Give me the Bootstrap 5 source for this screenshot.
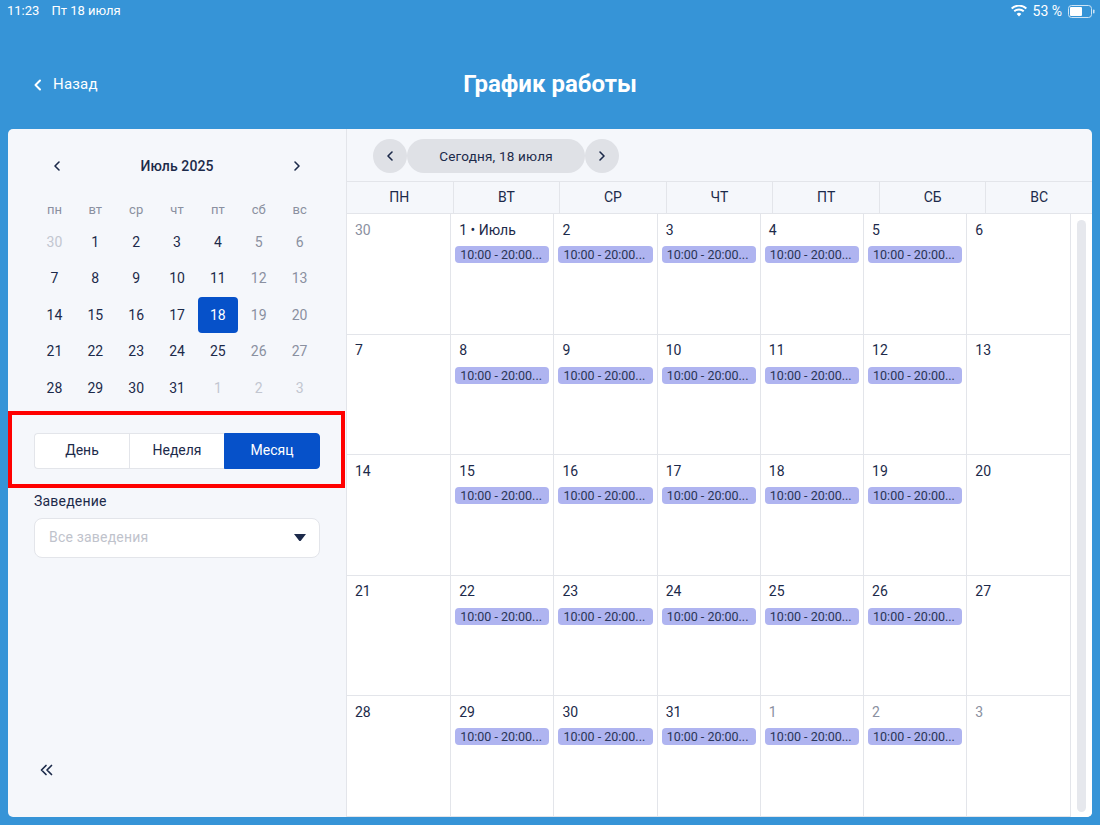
<!DOCTYPE html>
<html lang="ru">
<head>
<meta charset="utf-8">
<title>График работы</title>
<link href="https://cdn.jsdelivr.net/npm/bootstrap@5.3.0/dist/css/bootstrap.min.css" rel="stylesheet">
<style>
html,body{height:825px;overflow:hidden}
body{background:#3694d7;font-family:Roboto,"Liberation Sans",sans-serif;color:#1c2a4a;font-size:14px}
.status-row{height:22px;padding:0 5px 0 7px;color:#fff;font-size:13px;line-height:22px}
.status-left{gap:12px}
.status-right{font-size:14px;gap:6px}
.top-row{height:107px;color:#fff;position:relative;padding-top:18px}
.back-link{color:#fff;font-size:15px;text-decoration:none;padding:0 0 0 31px;letter-spacing:.2px}
.page-title{font-size:24px;font-weight:700;margin:0 0 2px;line-height:28px}
.shell{height:688px;margin:0 8px;background:#f5f7fb;border-radius:5px;overflow:hidden}
.side{width:338px;flex:none;padding-top:21px;position:relative}
.month-head{height:32px;padding:0 43px 0 43px;font-weight:500;font-size:14px;letter-spacing:.1px}
.mini-grid{display:grid;grid-template-columns:repeat(7,40.86px);grid-template-rows:28px repeat(5,36.4px);margin:14px 0 0 26px;text-align:center;align-items:center;justify-items:center;font-size:14px}
.mini-grid>span{width:41px;line-height:36.4px}
.mini-grid>.wd{color:#8a90a0;font-size:13px;line-height:28px}
.mini-grid>.dim{color:#8a90a0}
.mini-grid>.faint{color:#c2c6d0}
.mini-grid>.sel{background:#0651c9;color:#fff;border-radius:4px;width:40px}
.red-box{height:77px;margin-top:5px;border:4px solid #f00;margin-right:1px;padding:18px 22px 0 22px}
.seg{height:36px;width:286px;display:flex}
.seg .btn{flex:1 1 0;background:#fff;border:1px solid #e3e5ea;color:#1c2a4a;font-size:14px;padding:0;border-radius:0;line-height:33px}
.seg .btn:first-child{border-radius:4px 0 0 4px;border-right:0}
.seg .btn:nth-child(2){border-right:0}
.seg .btn.on{background:#0651c9;border-color:#0651c9;color:#fff;border-radius:0 4px 4px 0}
.venue{margin:3px 26px 0 26px}
.venue-label{font-size:14px;line-height:20px;margin-bottom:7px;letter-spacing:.2px}
.venue-box{height:40px;background:#fff;border:1px solid #e3e5ea;border-radius:8px;padding:0 13px 0 14px;color:#bfc3cc;font-size:14px;letter-spacing:.2px}
.collapse-btn{position:absolute;left:32px;bottom:41px;line-height:0}
.main-pane{flex:1;min-width:0;border-left:1px solid #e3e5ea;display:flex;flex-direction:column}
.tool-row{height:52px;padding:10px 0 0 26px;flex:none}
.pill{height:34px;background:#dfe1e6;display:flex;align-items:center;justify-content:center;font-size:13.5px;letter-spacing:.2px}
.pill-round{width:34px;border-radius:50%}
.pill-wide{width:178px;border-radius:17px}
.head-row{display:grid;grid-template-columns:repeat(7,1fr);height:33px;margin-left:-1px;border-top:1px solid #e3e5ea;border-bottom:1px solid #e3e5ea;flex:none}
.head-row>div{text-align:center;line-height:30px;font-size:14px;border-left:1px solid #e3e5ea}
.head-row>div:first-child{border-left:0}
.scroll-zone{flex:1;display:flex;background:#fff;min-height:0}
.month-grid{width:722.5px;flex:none;display:grid;grid-template-columns:repeat(7,1fr);grid-template-rows:repeat(5,1fr)}
.day{border-left:1px solid #e3e5ea;border-bottom:1px solid #e3e5ea;padding:7.5px 4px 0 4px;min-width:0;overflow:hidden}
.day:nth-child(7n+1){border-left:0}
.day-num{padding-left:4px;font-size:14px;line-height:17px;height:24.5px}
.day.out .day-num{color:#8a90a0}
.shift{display:block;height:17px;line-height:17px;background:#afb4f0;border-radius:4px;font-size:12.5px;padding:0 5px;white-space:nowrap;overflow:hidden;color:#2a3557}
.rail{flex:1;border-left:1px solid #e3e5ea;padding:6px 6px 5px 6px}
.rail-thumb{width:9px;height:100%;background:#e6e8ed;border-radius:5px}
</style>
</head>
<body>
<div class="status-row d-flex justify-content-between">
  <div class="status-left d-flex"><span>11:23</span><span>Пт 18 июля</span></div>
  <div class="status-right d-flex align-items-center">
    <svg width="16" height="12" viewBox="0 0 16 12"><path d="M8 11.5 5.7 8.9a3.4 3.4 0 0 1 4.6 0ZM3.9 7 2.6 5.6a8 8 0 0 1 10.8 0L12.1 7a6 6 0 0 0-8.200 0ZM1.300 4.200 0 2.800a11.800 11.800 0 0 1 16 0l-1.300 1.400a10 10 0 0 0-13.400 0Z" fill="#fff"/></svg>
    <span>53 %</span>
    <svg width="27" height="13" viewBox="0 0 27 13"><rect x=".5" y=".5" width="23" height="12" rx="3" fill="none" stroke="#cfe4f5"/><rect x="2" y="2" width="12" height="9" rx="1" fill="#fff"/><rect x="25" y="4.500" width="1.500" height="4" rx=".7" fill="#cfe4f5"/></svg>
  </div>
</div>
<div class="top-row d-flex align-items-center justify-content-center">
  <a class="back-link position-absolute start-0 d-flex align-items-center gap-2" href="#">
    <svg width="14" height="14" viewBox="0 0 14 14" fill="none" stroke="#fff" stroke-width="2" stroke-linecap="round" stroke-linejoin="round"><path d="M9 2.500 4.500 7 9 11.500"/></svg>
    <span>Назад</span>
  </a>
  <h1 class="page-title">График работы</h1>
</div>
<div class="shell d-flex">
  <aside class="side">
    <div class="month-head d-flex align-items-center justify-content-between">
      <svg width="12" height="12" viewBox="0 0 12 12" fill="none" stroke="#1c2a4a" stroke-width="1.600" stroke-linecap="round" stroke-linejoin="round"><path d="M8 2 4 6l4 4"/></svg>
      <span>Июль 2025</span>
      <svg width="12" height="12" viewBox="0 0 12 12" fill="none" stroke="#1c2a4a" stroke-width="1.600" stroke-linecap="round" stroke-linejoin="round"><path d="m4 2 4 4-4 4"/></svg>
    </div>
    <div class="mini-grid">
      <span class="wd">пн</span><span class="wd">вт</span><span class="wd">ср</span><span class="wd">чт</span><span class="wd">пт</span><span class="wd">сб</span><span class="wd">вс</span>
      <span class="faint">30</span><span>1</span><span>2</span><span>3</span><span>4</span><span class="dim">5</span><span class="dim">6</span>
      <span>7</span><span>8</span><span>9</span><span>10</span><span>11</span><span class="dim">12</span><span class="dim">13</span>
      <span>14</span><span>15</span><span>16</span><span>17</span><span class="sel">18</span><span class="dim">19</span><span class="dim">20</span>
      <span>21</span><span>22</span><span>23</span><span>24</span><span>25</span><span class="dim">26</span><span class="dim">27</span>
      <span>28</span><span>29</span><span>30</span><span>31</span><span class="faint">1</span><span class="faint">2</span><span class="faint">3</span>
    </div>
    <div class="red-box">
      <div class="seg" role="group">
        <button type="button" class="btn">День</button>
        <button type="button" class="btn">Неделя</button>
        <button type="button" class="btn on">Месяц</button>
      </div>
    </div>
    <div class="venue">
      <div class="venue-label">Заведение</div>
      <div class="venue-box d-flex align-items-center justify-content-between">
        <span>Все заведения</span>
        <svg width="12" height="7" viewBox="0 0 12 7"><path d="M0 0h12L7 6.500a1.200 1.200 0 0 1-2 0Z" fill="#1c2a4a"/></svg>
      </div>
    </div>
    <div class="collapse-btn">
      <svg width="13" height="12" viewBox="0 0 13 12" fill="none" stroke="#1c2a4a" stroke-width="1.700" stroke-linecap="round" stroke-linejoin="round"><path d="M6 1.500 1.500 6 6 10.500M11.500 1.500 7 6l4.500 4.500"/></svg>
    </div>
  </aside>
  <section class="main-pane">
    <div class="tool-row d-flex">
      <div class="pill pill-round"><svg width="12" height="12" viewBox="0 0 12 12" fill="none" stroke="#1c2a4a" stroke-width="1.600" stroke-linecap="round" stroke-linejoin="round"><path d="M8 2 4 6l4 4"/></svg></div>
      <div class="pill pill-wide">Сегодня, 18 июля</div>
      <div class="pill pill-round"><svg width="12" height="12" viewBox="0 0 12 12" fill="none" stroke="#1c2a4a" stroke-width="1.600" stroke-linecap="round" stroke-linejoin="round"><path d="m4 2 4 4-4 4"/></svg></div>
    </div>
    <div class="head-row"><div>ПН</div><div>ВТ</div><div>СР</div><div>ЧТ</div><div>ПТ</div><div>СБ</div><div>ВС</div></div>
    <div class="scroll-zone">
      <div class="month-grid">
        <div class="day out"><div class="day-num">30</div></div>
        <div class="day"><div class="day-num">1 • Июль</div><span class="shift">10:00 - 20:00...</span></div>
        <div class="day"><div class="day-num">2</div><span class="shift">10:00 - 20:00...</span></div>
        <div class="day"><div class="day-num">3</div><span class="shift">10:00 - 20:00...</span></div>
        <div class="day"><div class="day-num">4</div><span class="shift">10:00 - 20:00...</span></div>
        <div class="day"><div class="day-num">5</div><span class="shift">10:00 - 20:00...</span></div>
        <div class="day"><div class="day-num">6</div></div>
        <div class="day"><div class="day-num">7</div></div>
        <div class="day"><div class="day-num">8</div><span class="shift">10:00 - 20:00...</span></div>
        <div class="day"><div class="day-num">9</div><span class="shift">10:00 - 20:00...</span></div>
        <div class="day"><div class="day-num">10</div><span class="shift">10:00 - 20:00...</span></div>
        <div class="day"><div class="day-num">11</div><span class="shift">10:00 - 20:00...</span></div>
        <div class="day"><div class="day-num">12</div><span class="shift">10:00 - 20:00...</span></div>
        <div class="day"><div class="day-num">13</div></div>
        <div class="day"><div class="day-num">14</div></div>
        <div class="day"><div class="day-num">15</div><span class="shift">10:00 - 20:00...</span></div>
        <div class="day"><div class="day-num">16</div><span class="shift">10:00 - 20:00...</span></div>
        <div class="day"><div class="day-num">17</div><span class="shift">10:00 - 20:00...</span></div>
        <div class="day"><div class="day-num">18</div><span class="shift">10:00 - 20:00...</span></div>
        <div class="day"><div class="day-num">19</div><span class="shift">10:00 - 20:00...</span></div>
        <div class="day"><div class="day-num">20</div></div>
        <div class="day"><div class="day-num">21</div></div>
        <div class="day"><div class="day-num">22</div><span class="shift">10:00 - 20:00...</span></div>
        <div class="day"><div class="day-num">23</div><span class="shift">10:00 - 20:00...</span></div>
        <div class="day"><div class="day-num">24</div><span class="shift">10:00 - 20:00...</span></div>
        <div class="day"><div class="day-num">25</div><span class="shift">10:00 - 20:00...</span></div>
        <div class="day"><div class="day-num">26</div><span class="shift">10:00 - 20:00...</span></div>
        <div class="day"><div class="day-num">27</div></div>
        <div class="day"><div class="day-num">28</div></div>
        <div class="day"><div class="day-num">29</div><span class="shift">10:00 - 20:00...</span></div>
        <div class="day"><div class="day-num">30</div><span class="shift">10:00 - 20:00...</span></div>
        <div class="day"><div class="day-num">31</div><span class="shift">10:00 - 20:00...</span></div>
        <div class="day out"><div class="day-num">1</div><span class="shift">10:00 - 20:00...</span></div>
        <div class="day out"><div class="day-num">2</div><span class="shift">10:00 - 20:00...</span></div>
        <div class="day out"><div class="day-num">3</div></div>
      </div>
      <div class="rail"><div class="rail-thumb"></div></div>
    </div>
  </section>
</div>
<script src="https://cdn.jsdelivr.net/npm/bootstrap@5.3.0/dist/js/bootstrap.bundle.min.js"></script>
</body>
</html>
